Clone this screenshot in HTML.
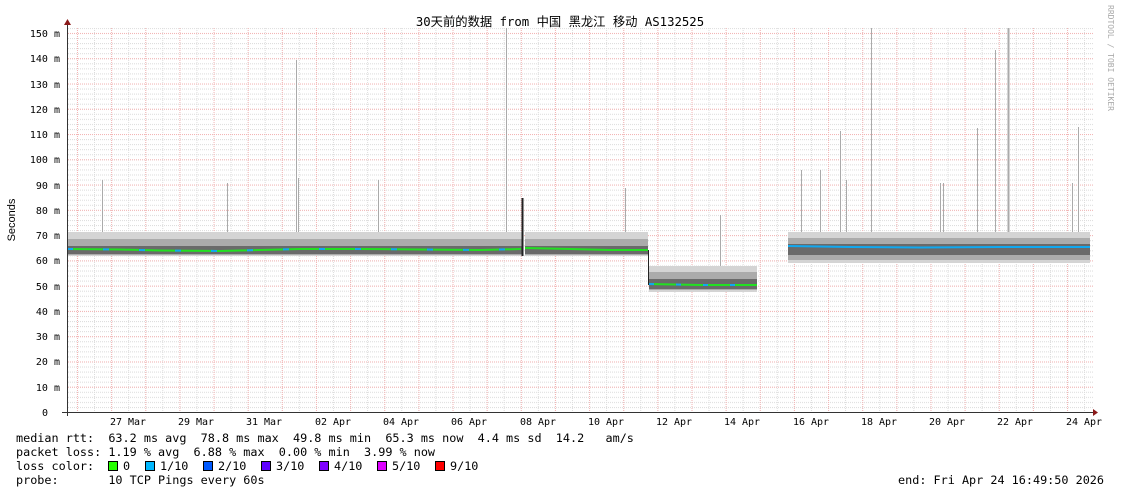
<!DOCTYPE html>
<html><head><meta charset="utf-8"><style>
html,body{margin:0;padding:0;background:#fff;width:1121px;height:494px;overflow:hidden}
svg{display:block}
text{font-family:"DejaVu Sans Mono","Liberation Mono",monospace;white-space:pre}
</style></head><body>
<svg width="1121" height="494" xmlns="http://www.w3.org/2000/svg">
<defs>
<pattern id="hmin" x="0" y="412" width="10" height="5.054" patternUnits="userSpaceOnUse">
<line x1="0" y1="0.5" x2="10" y2="0.5" stroke="#dcdcdc" stroke-width="1" stroke-dasharray="1,1"/>
</pattern>
<pattern id="hmaj" x="0" y="412" width="10" height="25.27" patternUnits="userSpaceOnUse">
<line x1="0" y1="0.5" x2="10" y2="0.5" stroke="#f4b4b4" stroke-width="1" stroke-dasharray="1,1"/>
</pattern>
<pattern id="vmin" x="94" y="0" width="17.07" height="10" patternUnits="userSpaceOnUse">
<line x1="0.5" y1="0" x2="0.5" y2="10" stroke="#dcdcdc" stroke-width="1" stroke-dasharray="1,1"/>
</pattern>
<pattern id="vmaj" x="77" y="0" width="34.14" height="10" patternUnits="userSpaceOnUse">
<line x1="0.5" y1="0" x2="0.5" y2="10" stroke="#f4b4b4" stroke-width="1" stroke-dasharray="1,1"/>
</pattern>
</defs>
<rect x="68" y="28" width="1025" height="384" fill="url(#hmin)"/>
<rect x="68" y="28" width="1025" height="384" fill="url(#vmin)"/>
<rect x="68" y="28" width="1025" height="384" fill="url(#hmaj)"/>
<rect x="68" y="28" width="1025" height="384" fill="url(#vmaj)"/>

<g stroke="#aaa" stroke-width="1">
<line x1="102.5" y1="180" x2="102.5" y2="250"/>
<line x1="227.5" y1="183" x2="227.5" y2="250"/>
<line x1="296.5" y1="60" x2="296.5" y2="250"/>
<line x1="298.5" y1="178" x2="298.5" y2="250"/>
<line x1="378.5" y1="180" x2="378.5" y2="250"/>
<line x1="506.5" y1="28" x2="506.5" y2="250"/>
<line x1="625.5" y1="188" x2="625.5" y2="250"/>
<line x1="720.5" y1="215" x2="720.5" y2="285"/>
<line x1="801.5" y1="170" x2="801.5" y2="250"/>
<line x1="820.5" y1="170" x2="820.5" y2="250"/>
<line x1="840.5" y1="131" x2="840.5" y2="250"/>
<line x1="846.5" y1="180" x2="846.5" y2="250"/>
<line x1="871.5" y1="28" x2="871.5" y2="250"/>
<line x1="940.5" y1="183" x2="940.5" y2="250"/>
<line x1="943.5" y1="183" x2="943.5" y2="250"/>
<line x1="977.5" y1="128" x2="977.5" y2="250"/>
<line x1="995.5" y1="50" x2="995.5" y2="250"/>
<line x1="1008.5" y1="28" x2="1008.5" y2="250" stroke-width="2"/>
<line x1="1072.5" y1="183" x2="1072.5" y2="250"/>
<line x1="1078.5" y1="127" x2="1078.5" y2="250"/>
</g>

<rect x="67" y="232" width="455" height="24" fill="#d4d4d4"/>
<rect x="67" y="239" width="455" height="16" fill="#ababab"/>
<rect x="67" y="246" width="455" height="8" fill="#6a6a6a"/>
<rect x="525" y="232" width="123" height="24" fill="#d4d4d4"/>
<rect x="525" y="239" width="123" height="16" fill="#ababab"/>
<rect x="525" y="246" width="123" height="8" fill="#6a6a6a"/>
<line x1="522.5" y1="198" x2="522.5" y2="256" stroke="#222" stroke-width="2"/>
<line x1="648.5" y1="250" x2="648.5" y2="285" stroke="#222" stroke-width="1"/>
<rect x="649" y="266" width="108" height="26" fill="#d4d4d4"/>
<rect x="649" y="272" width="108" height="18" fill="#ababab"/>
<rect x="649" y="279" width="108" height="10" fill="#6a6a6a"/>
<rect x="788" y="232" width="302" height="31" fill="#d4d4d4"/>
<rect x="788" y="238" width="302" height="22" fill="#ababab"/>
<rect x="788" y="244" width="302" height="11" fill="#6a6a6a"/>

<polyline fill="none" stroke="#22e022" stroke-width="2" points="67,249 120,249.5 160,250.5 220,251 260,250 300,249 360,249 420,249.5 480,250 521,249"/>
<polyline fill="none" stroke="#10a8f0" stroke-width="2" stroke-dasharray="6,30" points="67,249 120,249.5 160,250.5 220,251 260,250 300,249 360,249 420,249.5 480,250 521,249"/>
<polyline fill="none" stroke="#22e022" stroke-width="2" points="525,248 570,249 610,250 648,250"/>
<polyline fill="none" stroke="#22e022" stroke-width="2" points="649,284 700,285 757,285"/>
<polyline fill="none" stroke="#10a8f0" stroke-width="2" stroke-dasharray="5,22" points="649,284 700,285 757,285"/>
<polyline fill="none" stroke="#10a8f0" stroke-width="2" points="788,246 850,247 920,247.5 1000,247 1090,247"/>

<line x1="67.5" y1="24" x2="67.5" y2="416" stroke="#333" stroke-width="1"/>
<polygon points="64,25 71,25 67.5,19" fill="#8b1a1a"/>
<line x1="62" y1="412.5" x2="1095" y2="412.5" stroke="#333" stroke-width="1"/>
<polygon points="1093,409 1093,416 1098,412.5" fill="#8b1a1a"/>

<g font-size="10" fill="#000" text-anchor="end">
<text x="60" y="37">150 m</text><text x="60" y="62">140 m</text><text x="60" y="88">130 m</text>
<text x="60" y="113">120 m</text><text x="60" y="138">110 m</text><text x="60" y="163">100 m</text>
<text x="60" y="189">90 m</text><text x="60" y="214">80 m</text><text x="60" y="239">70 m</text>
<text x="60" y="264">60 m</text><text x="60" y="290">50 m</text><text x="60" y="315">40 m</text>
<text x="60" y="340">30 m</text><text x="60" y="365">20 m</text><text x="60" y="391">10 m</text>
<text x="48" y="416">0</text>
</g>
<g font-size="10" fill="#000" text-anchor="middle">
<text x="128" y="425">27 Mar</text><text x="196" y="425">29 Mar</text><text x="264" y="425">31 Mar</text>
<text x="333" y="425">02 Apr</text><text x="401" y="425">04 Apr</text><text x="469" y="425">06 Apr</text>
<text x="538" y="425">08 Apr</text><text x="606" y="425">10 Apr</text><text x="674" y="425">12 Apr</text>
<text x="742" y="425">14 Apr</text><text x="811" y="425">16 Apr</text><text x="879" y="425">18 Apr</text>
<text x="947" y="425">20 Apr</text><text x="1015" y="425">22 Apr</text><text x="1084" y="425">24 Apr</text>
</g>
<text x="15" y="220" font-size="11" text-anchor="middle" transform="rotate(-90 15 220)" style="font-family:'Liberation Sans',sans-serif">Seconds</text>
<text x="560" y="26" font-size="12.3" text-anchor="middle" style="font-family:'DejaVu Sans Mono','Noto Sans CJK SC',monospace">30天前的数据 from 中国 黑龙江 移动 AS132525</text>
<text x="1108" y="5" font-size="8" fill="#aaa" transform="rotate(90 1108 5)">RRDTOOL / TOBI OETIKER</text>

<g font-size="11.8" fill="#000">
<text x="16" y="442">median rtt:  63.2 ms avg  78.8 ms max  49.8 ms min  65.3 ms now  4.4 ms sd  14.2   am/s</text>
<text x="16" y="456">packet loss: 1.19 % avg  6.88 % max  0.00 % min  3.99 % now</text>
<text x="16" y="470">loss color:</text>
<text x="16" y="484">probe:       10 TCP Pings every 60s</text>
<text x="1104" y="484" text-anchor="end">end: Fri Apr 24 16:49:50 2026</text>
<text x="123" y="470">0</text><text x="160" y="470">1/10</text><text x="218" y="470">2/10</text>
<text x="276" y="470">3/10</text><text x="334" y="470">4/10</text><text x="392" y="470">5/10</text><text x="450" y="470">9/10</text>
</g>
<g stroke="#000" stroke-width="1">
<rect x="108.5" y="461.5" width="9" height="9" fill="#26ff00"/>
<rect x="145.5" y="461.5" width="9" height="9" fill="#00b8ff"/>
<rect x="203.5" y="461.5" width="9" height="9" fill="#0059ff"/>
<rect x="261.5" y="461.5" width="9" height="9" fill="#5e00ff"/>
<rect x="319.5" y="461.5" width="9" height="9" fill="#7e00ff"/>
<rect x="377.5" y="461.5" width="9" height="9" fill="#dd00ff"/>
<rect x="435.5" y="461.5" width="9" height="9" fill="#ff0000"/>
</g>
</svg>
</body></html>
